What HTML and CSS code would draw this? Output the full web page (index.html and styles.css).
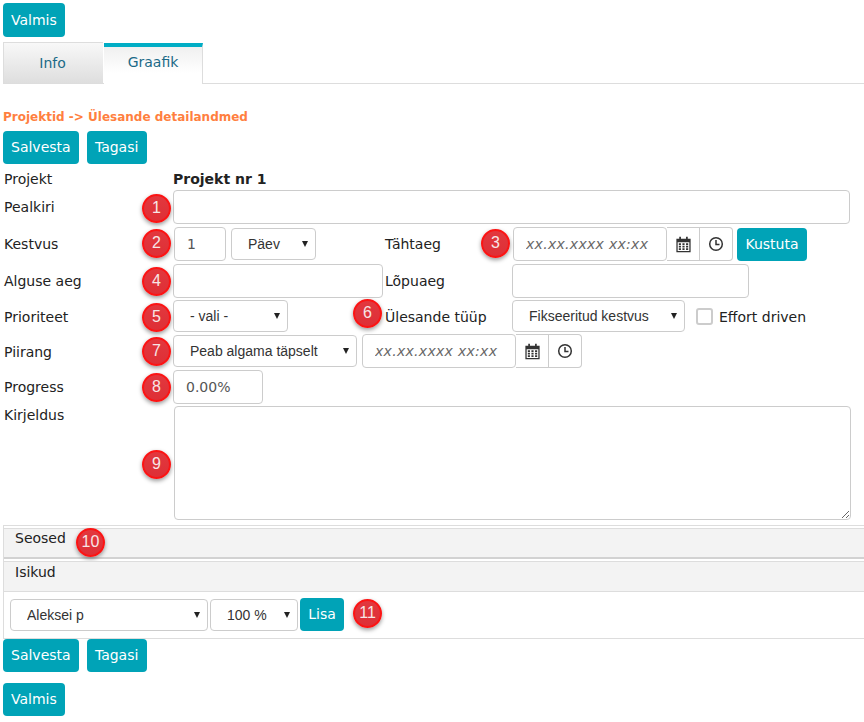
FILE: index.html
```html
<!DOCTYPE html>
<html lang="et">
<head>
  <meta charset="UTF-8">
  <meta name="viewport" content="width=device-width, initial-scale=1.0">
  <title>Ülesande detailandmed</title>
  <link rel="stylesheet" href="styles.css">
</head>
<body>
  <svg class="icon-defs" width="0" height="0">
    <symbol id="icon-calendar" viewBox="0 0 16 16">
      <path fill="#333" fill-rule="evenodd" d="M4 .8h1.600v1.700H4zM10.400 .8H12v1.700h-1.600zM1.300 2.500h13.400V15.200H1.300zM2.500 5.800v8.200h11V5.800zM3.600 6.800h2v1.600h-2zM7 6.800h2v1.600H7zM10.400 6.800h2v1.600h-2zM3.600 9.200h2v1.600h-2zM7 9.200h2v1.600H7zM10.400 9.200h2v1.600h-2zM3.600 11.600h2v1.600h-2zM7 11.600h2v1.600H7zM10.400 11.600h2v1.600h-2z"/>
    </symbol>
    <symbol id="icon-clock" viewBox="0 0 16 16">
      <circle cx="8" cy="8" r="6.300" fill="none" stroke="#333" stroke-width="1.500"/>
      <path fill="none" stroke="#333" stroke-width="1.500" d="M8 4v4.500h3.500"/>
    </symbol>
  </svg>
  <div class="page">
    <div class="top-actions">
      <button type="button" class="btn">Valmis</button>
    </div>
    <div class="tabs">
      <a class="tab">Info</a>
      <a class="tab tab-active">Graafik</a>
    </div>
    <h2 class="crumb">Projektid -&gt; Ülesande detailandmed</h2>
    <div class="actions">
      <button type="button" class="btn">Salvesta</button>
      <button type="button" class="btn">Tagasi</button>
    </div>

    <form class="task-form">
      <div class="row row-project">
        <label>Projekt</label>
        <strong class="span-3">Projekt nr 1</strong>
      </div>
      <div class="row row-title">
        <label>Pealkiri</label>
        <input type="text" class="field span-3 title-input">
        <span class="badge badge-left">1</span>
      </div>
      <div class="row row-duration">
        <label>Kestvus</label>
        <div class="inline">
          <input type="text" class="field duration-input" value="1">
          <select class="field duration-unit"><option>Päev</option></select>
        </div>
        <label class="label-mid">Tähtaeg</label>
        <div class="inline">
          <div class="date-group date-deadline">
            <input type="text" class="field date-input" placeholder="xx.xx.xxxx xx:xx">
            <span class="addon"><svg class="icon-cal"><use href="#icon-calendar"/></svg></span>
            <span class="addon addon-last"><svg class="icon-time"><use href="#icon-clock"/></svg></span>
          </div>
          <button type="button" class="btn btn-delete">Kustuta</button>
        </div>
        <span class="badge badge-deadline">3</span>
        <span class="badge badge-left">2</span>
      </div>
      <div class="row row-times">
        <label>Alguse aeg</label>
        <input type="text" class="field start-input">
        <label class="label-mid">Lõpuaeg</label>
        <input type="text" class="field end-input">
        <span class="badge badge-left">4</span>
      </div>
      <div class="row row-priority">
        <label>Prioriteet</label>
        <select class="field priority-select"><option>- vali -</option></select>
        <label class="label-mid">Ülesande tüüp</label>
        <div class="inline">
          <select class="field type-select"><option>Fikseeritud kestvus</option></select>
          <label class="check"><span class="check-box"></span>Effort driven</label>
        </div>
        <span class="badge badge-left">5</span>
        <span class="badge badge-type">6</span>
      </div>
      <div class="row row-limit">
        <label>Piirang</label>
        <div class="inline span-3">
          <select class="field limit-select"><option>Peab algama täpselt</option></select>
          <div class="date-group date-limit">
            <input type="text" class="field date-input" placeholder="xx.xx.xxxx xx:xx">
            <span class="addon"><svg class="icon-cal"><use href="#icon-calendar"/></svg></span>
            <span class="addon addon-last"><svg class="icon-time"><use href="#icon-clock"/></svg></span>
          </div>
        </div>
        <span class="badge badge-left">7</span>
      </div>
      <div class="row row-progress">
        <label>Progress</label>
        <input type="text" class="field progress-input" value="0.00%">
        <span class="badge badge-left">8</span>
      </div>
      <div class="row row-desc">
        <label>Kirjeldus</label>
        <textarea class="field span-3 desc-input"></textarea>
        <span class="badge badge-left badge-desc">9</span>
      </div>
    </form>

    <div class="panel">
      <div class="panel-head panel-head-links">Seosed<span class="badge badge-links">10</span></div>
      <div class="panel-head panel-head-people">Isikud</div>
      <div class="people-row">
        <select class="field person-select"><option>Aleksei p</option></select>
        <select class="field percent-select"><option>100 %</option></select>
        <button type="button" class="btn btn-add">Lisa</button>
        <span class="badge badge-add">11</span>
      </div>
    </div>

    <div class="actions">
      <button type="button" class="btn">Salvesta</button>
      <button type="button" class="btn">Tagasi</button>
    </div>
    <div class="last-actions">
      <button type="button" class="btn">Valmis</button>
    </div>
  </div>
</body>
</html>
```

FILE: styles.css
```css
html, body {
  margin: 0;
  padding: 0;
  overflow: hidden;
}
body {
  font-family: "DejaVu Sans", Verdana, sans-serif;
  font-size: 14px;
  color: #222;
  background-color: white;
}
.icon-defs {
  position: absolute;
}
.page {
  padding: 3px 0 0 3px;
  height: 719px;
}
.btn {
  height: 34px;
  padding: 0 8px 1px;
  border: none;
  border-radius: 4px;
  background-color: #00a3b7;
  color: white;
  font-family: "DejaVu Sans", Verdana, sans-serif;
  font-size: 14px;
  cursor: pointer;
}
.top-actions {
  height: 34px;
}
.tabs {
  display: flex;
  height: 41px;
  margin-top: 5px;
  border-bottom: 1px solid #ddd;
}
.tab {
  box-sizing: border-box;
  width: 100px;
  padding-right: 2px;
  line-height: 41px;
  text-align: center;
  color: #1b6a87;
  background: linear-gradient(#f8f8f8, #dedede);
  border-top: 1px solid #ddd;
  border-left: 1px solid #ddd;
}
.tab-active {
  width: 99px;
  height: 41px;
  padding-right: 0;
  margin: 1px 0 -1px 1px;
  background: linear-gradient(#f0f0f0, white 70%);
  border-top: 4px solid #00adc5;
  border-left: none;
  border-right: 1px solid #ddd;
  line-height: 31px;
}
.crumb {
  margin: 25px 0 0 0;
  height: 22px;
  font-size: 12px;
  line-height: 16px;
  color: #ff7f3f;
}
.actions {
  display: flex;
  gap: 8px;
  height: 33px;
}
.actions .btn {
  height: 33px;
  min-width: 60px;
}
.task-form {
  margin-top: 7px;
}
.row {
  position: relative;
  display: grid;
  grid-template-columns: 170px 212px 127px 1fr;
  align-items: center;
}
.row label {
  padding-left: 1px;
}
.row .label-mid {
  padding-left: 0;
}
.span-3 {
  grid-column: 2 / 5;
}
.inline {
  display: flex;
  align-items: center;
}
.row-project {
  height: 19px;
  align-items: start;
}
.row-title {
  height: 34px;
}
.row-duration {
  height: 34px;
  margin-top: 3px;
}
.row-times {
  height: 34px;
  margin-top: 3px;
}
.row-priority {
  height: 33px;
  margin-top: 2px;
}
.row-limit {
  height: 33px;
  margin-top: 2px;
}
.row-progress {
  height: 34px;
  margin-top: 2px;
}
.row-desc {
  height: 114px;
  margin-top: 2px;
  align-items: start;
}
.row-desc label {
  padding-top: 1px;
}
.field {
  box-sizing: border-box;
  height: 34px;
  border: 1px solid #ccc;
  border-radius: 4px;
  background-color: white;
  color: #555;
  font-family: "DejaVu Sans", Verdana, sans-serif;
  font-size: 14px;
  padding: 0 12px;
  outline: none;
}
select.field {
  appearance: none;
  -webkit-appearance: none;
  height: 32px;
  padding: 0 0 0 16px;
  font-family: "Liberation Sans", Arial, sans-serif;
  color: #333;
  background-image: url("data:image/svg+xml,%3Csvg xmlns='http://www.w3.org/2000/svg' width='8' height='6'%3E%3Cpath d='M1 0h6L4 6z' fill='%23222'/%3E%3C/svg%3E");
  background-repeat: no-repeat;
  background-position: right 6px center;
}
.row-priority select.field,
.row-limit select.field {
  align-self: flex-start;
}
.row-priority .inline,
.row-limit .inline {
  align-self: start;
}
.title-input {
  width: 677px;
}
.duration-input {
  width: 52px;
  margin-left: 1px;
}
.duration-unit {
  width: 85px;
  margin-left: 5px;
}
.date-group {
  display: flex;
}
.date-deadline {
  margin-left: 1px;
}
.date-input {
  width: 154px;
  font-style: italic;
  letter-spacing: 0.3px;
}
.date-input::placeholder {
  color: #666;
}
.addon {
  box-sizing: border-box;
  display: flex;
  align-items: center;
  justify-content: center;
  width: 33px;
  height: 34px;
  border: 1px solid #ccc;
  border-left: none;
}
.addon-last {
  border-radius: 0 4px 4px 0;
}
.icon-cal {
  width: 17px;
  height: 17px;
}
.icon-time {
  width: 16px;
  height: 16px;
  margin-top: -1px;
}
.btn-delete {
  margin-left: 4px;
  height: 33px;
  width: 70px;
  padding: 0 0 1px;
}
.start-input {
  width: 210px;
}
.end-input {
  width: 237px;
}
.priority-select {
  width: 115px;
}
.type-select {
  width: 173px;
}
.row .check {
  display: flex;
  align-items: center;
  margin: 1px 0 0 11px;
  padding-left: 0;
}
.check-box {
  box-sizing: border-box;
  width: 17px;
  height: 17px;
  margin-right: 6px;
  border: 2px solid #ccc;
  border-radius: 3px;
}
.limit-select {
  width: 184px;
}
.date-limit {
  margin: -1px 0 0 5px;
}
.progress-input {
  width: 90px;
}
.desc-input {
  width: 677px;
  height: 114px;
  margin-left: 1px;
  display: block;
}
.badge {
  position: absolute;
  box-sizing: border-box;
  width: 29px;
  height: 29px;
  border: 2px solid #fb1414;
  border-radius: 50%;
  background: linear-gradient(#e2383e, #de2f36);
  box-shadow: 0 2px 4px rgba(0, 0, 0, 0.4);
  color: #f7e6e6;
  font-size: 16px;
  font-family: "Liberation Sans", Arial, sans-serif;
  line-height: 24px;
  text-align: center;
}
.badge-left {
  left: 139px;
  top: 3px;
}
.row-title .badge-left {
  top: 4px;
}
.row-duration .badge-left,
.row-limit .badge-left {
  top: 2px;
}
.badge-deadline {
  left: 478px;
  top: 2px;
}
.badge-type {
  left: 350px;
  top: -1px;
}
.row-desc .badge-desc {
  top: 44px;
}
.panel {
  box-sizing: border-box;
  width: 880px;
  height: 114px;
  margin-top: 5px;
  padding-top: 2px;
  border: 1px solid #ddd;
}
.panel-head {
  box-sizing: border-box;
  position: relative;
  background-color: #f3f3f3;
  border-top: 1px solid #ddd;
  padding-left: 11px;
  line-height: 18px;
}
.panel-head-links {
  height: 31px;
  border-bottom: 2px solid #d2d2d2;
}
.panel-head-people {
  height: 31px;
  margin-top: 2px;
  border-bottom: 1px solid #ddd;
  padding-top: 1px;
}
.badge-links {
  left: 72px;
  top: -1px;
}
.people-row {
  position: relative;
  display: flex;
  align-items: center;
  padding: 6px 0 0 6px;
}
.person-select {
  width: 198px;
}
.percent-select {
  width: 88px;
  margin-left: 2px;
}
.btn-add {
  height: 33px;
  width: 44px;
  padding: 0 0 1px;
  margin-left: 2px;
}
.badge-add {
  left: 349px;
  top: 7px;
}
.last-actions {
  margin-top: 11px;
}
.last-actions .btn {
  height: 33px;
}
```
